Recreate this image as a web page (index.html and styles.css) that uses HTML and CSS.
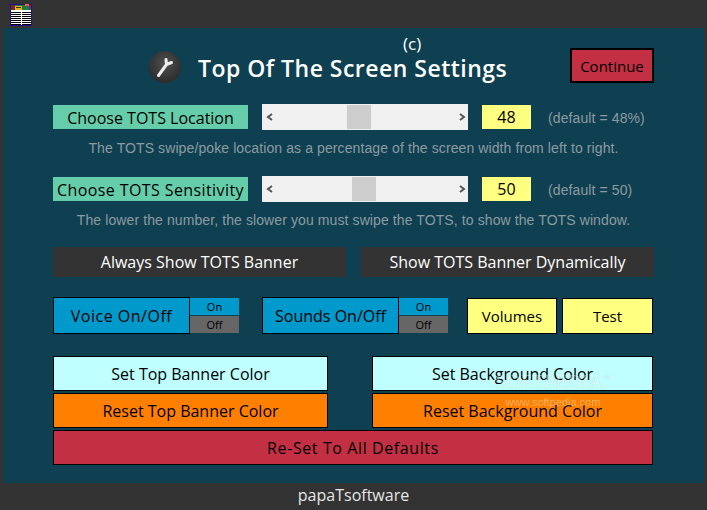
FILE: index.html
```html
<!DOCTYPE html>
<html lang="en">
<head>
  <meta charset="UTF-8" />
  <meta name="viewport" content="width=device-width, initial-scale=1.0" />
  <title>Top Of The Screen Settings</title>
  <link rel="stylesheet" href="styles.css">
</head>
<body>
  <div class="topbar">
    <svg class="app-icon" width="22" height="22" viewBox="0 0 22 22">
      <rect x="0.5" y="0.5" width="21" height="21" fill="#fff" stroke="#2a0f8c"/>
      <rect x="1" y="1" width="20" height="5" fill="#1f7a4a"/>
      <rect x="1" y="1" width="4" height="5" fill="#7a2a2a"/>
      <rect x="5" y="2" width="7" height="4" fill="#e3b31c"/>
      <rect x="6" y="3" width="5" height="1" fill="#333"/>
      <rect x="15" y="0" width="4" height="2" fill="#e86a1a"/>
      <rect x="19" y="1" width="2" height="4" fill="#8a1a6a"/>
      <path d="M1 8.5h20M1 10.5h20M1 12.5h20M1 14.5h20M1 16.5h20M1 18.5h20M1 20.5h20" stroke="#000" stroke-width="1"/>
      <rect x="11" y="6" width="1" height="15" fill="#fff"/>
    </svg>
  </div>

  <main class="panel">
    <div class="head">
      <svg class="wrench" width="32" height="32" viewBox="0 0 32 32">
        <defs>
          <radialGradient id="disc" cx="50%" cy="40%" r="60%">
            <stop offset="0%" stop-color="#505050"/>
            <stop offset="100%" stop-color="#2c2c2c"/>
          </radialGradient>
          <filter id="soft"><feGaussianBlur stdDeviation="0.5"/></filter>
        </defs>
        <circle cx="16" cy="16" r="16" fill="url(#disc)"/>
        <path d="M9.5 24.5L17.5 13.5M17.5 13.5L17 8.5M17.5 13.5L22.5 11.5" stroke="#eeeeee" stroke-width="3" stroke-linecap="round" fill="none" filter="url(#soft)"/>
      </svg>
      <div class="title-block">
        <div class="copy">(c)</div>
        <h1>Top Of The Screen Settings</h1>
      </div>
      <button class="continue">Continue</button>
    </div>

    <div class="setting">
      <div class="label">Choose TOTS Location</div>
      <div class="slider">
        <svg class="arrow" width="8" height="8" viewBox="0 0 8 8"><path d="M6 1L2 4L6 7" fill="none" stroke="#555" stroke-width="2"/></svg>
        <div class="track"><div class="thumb" style="margin-left:68px"></div></div>
        <svg class="arrow" width="8" height="8" viewBox="0 0 8 8"><path d="M2 1L6 4L2 7" fill="none" stroke="#555" stroke-width="2"/></svg>
      </div>
      <div class="value">48</div>
      <div class="default">(default = 48%)</div>
    </div>
    <p class="help help-one">The TOTS swipe/poke location as a percentage of the screen width from left to right.</p>

    <div class="setting">
      <div class="label label-wide">Choose TOTS Sensitivity</div>
      <div class="slider">
        <svg class="arrow" width="8" height="8" viewBox="0 0 8 8"><path d="M6 1L2 4L6 7" fill="none" stroke="#555" stroke-width="2"/></svg>
        <div class="track"><div class="thumb" style="margin-left:73px"></div></div>
        <svg class="arrow" width="8" height="8" viewBox="0 0 8 8"><path d="M2 1L6 4L2 7" fill="none" stroke="#555" stroke-width="2"/></svg>
      </div>
      <div class="value">50</div>
      <div class="default">(default = 50)</div>
    </div>
    <p class="help help-two">The lower the number, the slower you must swipe the TOTS, to show the TOTS window.</p>

    <div class="banner-row">
      <button class="dark">Always Show TOTS Banner</button>
      <button class="dark">Show TOTS Banner Dynamically</button>
    </div>

    <div class="toggle-row">
      <div class="toggle">
        <div class="toggle-name toggle-voice">Voice On/Off</div>
        <div class="switch"><span class="on">On</span><span class="off">Off</span></div>
      </div>
      <div class="toggle">
        <div class="toggle-name">Sounds On/Off</div>
        <div class="switch"><span class="on">On</span><span class="off">Off</span></div>
      </div>
      <div class="extras">
        <button class="yellow">Volumes</button>
        <button class="yellow yellow-test">Test</button>
      </div>
    </div>

    <div class="color-grid">
      <button class="cyan">Set Top Banner Color</button>
      <button class="cyan">Set Background Color</button>
      <button class="orange">Reset Top Banner Color</button>
      <button class="orange">Reset Background Color</button>
      <button class="red wide">Re-Set To All Defaults</button>
    </div>

    <div class="watermark">
      <div class="wm-name">SOFTPEDIA<sup>™</sup></div>
      <div class="wm-url">www.softpedia.com</div>
    </div>
  </main>

  <footer class="footer">papaTsoftware</footer>
</body>
</html>
```

FILE: styles.css
```css
* {
  box-sizing: border-box;
}
body {
  margin: 0;
  width: 707px;
  height: 510px;
  overflow: hidden;
  background: #333333;
  font-family: "Comic Sans MS", "Open Sans", sans-serif;
  color: #000;
}
button {
  font-family: inherit;
  font-size: 16px;
  padding: 0;
  color: #000;
  border: 1px solid #000;
  border-radius: 0;
}
.topbar {
  height: 28px;
  padding: 4px 0 0 10px;
}
.app-icon {
  display: block;
}
.panel {
  position: relative;
  height: 455px;
  margin: 0 3px;
  padding: 0 50px;
  background: #0f4051;
}
.head {
  display: flex;
  height: 76px;
  align-items: flex-start;
}
.wrench {
  margin: 23px 0 0 96px;
  flex: none;
}
.title-block {
  width: 320px;
  margin-left: 17px;
  color: #fff;
}
.copy {
  height: 24px;
  padding: 8px 0 0 205px;
  font-size: 17px;
  line-height: 16px;
}
h1 {
  margin: 0;
  font-size: 23px;
  font-weight: 600;
  line-height: 32px;
  letter-spacing: 0.48px;
  white-space: nowrap;
}
.continue {
  width: 84px;
  height: 35px;
  margin: 20px 0 0 52px;
  border: 2px solid #000;
  background: #c33043;
  font-size: 15px;
}
.setting {
  display: flex;
  align-items: center;
  height: 26px;
}
.label {
  width: 195px;
  height: 24px;
  padding-top: 1px;
  background: #66cdaa;
  font-size: 16px;
  line-height: 24px;
  text-align: center;
  white-space: nowrap;
}
.label-wide {
  letter-spacing: 0.4px;
}
.slider {
  display: flex;
  align-items: center;
  width: 206px;
  height: 26px;
  margin-left: 14px;
  padding: 0 2px 0 4px;
  background: #f0f0f0;
}
.arrow {
  flex: none;
}
.track {
  flex: 1;
  height: 24px;
  padding-left: 5px;
}
.thumb {
  width: 24px;
  height: 24px;
  background: #cdcdcd;
}
.value {
  width: 49px;
  height: 24px;
  margin-left: 14px;
  background: #ffff80;
  font-size: 16px;
  line-height: 24px;
  text-align: center;
}
.default {
  margin-left: 17px;
  padding-top: 2px;
  color: #8c9ba1;
  font-family: "Liberation Sans", sans-serif;
  font-size: 14px;
  letter-spacing: 0.1px;
  white-space: nowrap;
}
.help {
  margin: 0;
  color: #8c9ba1;
  font-family: "Liberation Sans", sans-serif;
  font-size: 14px;
  line-height: 16px;
  letter-spacing: 0.1px;
  text-align: center;
  white-space: nowrap;
}
.help-one {
  height: 46px;
  padding-top: 10px;
}
.help-two {
  height: 45px;
  padding-top: 10px;
}
.banner-row {
  display: flex;
  justify-content: space-between;
}
.dark {
  width: 293px;
  height: 30px;
  border: 0;
  background: #333333;
  color: #fff;
  line-height: 30px;
}
.toggle-row {
  display: flex;
  margin-top: 20px;
  height: 37px;
}
.toggle {
  display: flex;
  width: 209px;
}
.toggle-name {
  width: 137px;
  padding-top: 1px;
  border: 1px solid #000;
  background: #0099cc;
  font-size: 16px;
  line-height: 34px;
  text-align: center;
}
.toggle-voice {
  letter-spacing: 0.5px;
}
.switch {
  display: flex;
  flex-direction: column;
  width: 49px;
  height: 35px;
  margin-top: 1px;
  font-size: 11px;
  text-align: center;
}
.on {
  height: 18px;
  line-height: 17px;
  background: #0099cc;
  border-bottom: 1px solid #0f4051;
}
.off {
  height: 17px;
  line-height: 17px;
  background: #666666;
}
.extras {
  display: flex;
  gap: 5px;
  margin-left: -4px;
  padding-top: 1px;
}
.yellow {
  width: 90px;
  background: #ffff80;
  font-size: 15px;
}
.yellow-test {
  width: 91px;
}
.color-grid {
  display: grid;
  grid-template-columns: 275px 281px;
  gap: 2px 44px;
  width: 600px;
  margin-top: 22px;
}
.color-grid button {
  height: 35px;
}
.cyan {
  background: #bfffff;
}
.orange {
  background: #ff8000;
}
.red {
  background: #c33043;
}
.wide {
  grid-column: 1 / -1;
  letter-spacing: 0.6px;
}
/* softpedia stamp sits over the colour buttons */
.watermark {
  position: absolute;
  left: 485px;
  top: 338px;
  width: 130px;
  color: #fff;
  opacity: 0.35;
  text-align: center;
  pointer-events: none;
}
.wm-name {
  font-family: "Liberation Serif", serif;
  font-size: 20px;
  line-height: 26px;
  text-shadow: 0 0 1px #555;
}
.wm-name sup {
  font-size: 8px;
}
.wm-url {
  font-family: "Liberation Sans", sans-serif;
  font-size: 11px;
  line-height: 14px;
}
.footer {
  height: 27px;
  color: #e6e6e6;
  font-size: 16px;
  line-height: 24px;
  text-align: center;
}
```
